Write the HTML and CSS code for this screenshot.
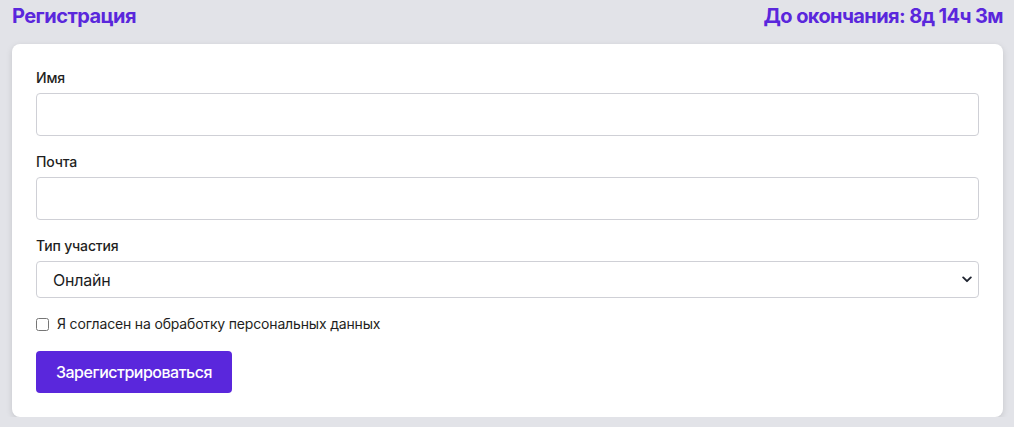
FILE: index.html
```html
<!DOCTYPE html>
<html lang="ru">
<head>
<meta charset="utf-8">
<title>Регистрация</title>
<link rel="stylesheet" href="styles.css">
</head>
<body>
<header class="top">
  <h1 class="title">Регистрация</h1>
  <div class="timer">До окончания: 8д 14ч 3м</div>
</header>
<form class="card">
  <div class="field">
    <label class="label" for="name">Имя</label>
    <input class="input" id="name" type="text">
  </div>
  <div class="field">
    <label class="label" for="mail">Почта</label>
    <input class="input" id="mail" type="email">
  </div>
  <div class="field">
    <label class="label" for="type">Тип участия</label>
    <div class="select-wrap">
      <select class="select" id="type">
        <option>Онлайн</option>
        <option>Офлайн</option>
      </select>
      <svg class="chev" width="10" height="7" viewBox="0 0 10 7"><path d="M1.2 1.4 L5 5.2 L8.8 1.4" fill="none" stroke="#1f2430" stroke-width="1.9" stroke-linecap="round" stroke-linejoin="round"/></svg>
    </div>
  </div>
  <label class="check">
    <input type="checkbox" class="cb">
    <span>Я согласен на обработку персональных данных</span>
  </label>
  <button type="button" class="btn">Зарегистрироваться</button>
</form>
</body>
</html>
```
FILE: styles.css
```css
html, body {
  margin: 0;
  padding: 0;
}
body {
  background: #e2e3e8;
  font-family: Inter, "Noto Sans", sans-serif;
  color: #1c1c1e;
  padding: 0 11px 0 12px;
}
.top {
  height: 32px;
  display: flex;
  align-items: center;
  justify-content: space-between;
  margin-bottom: 12px;
}
.title, .timer {
  margin: 0;
  font-size: 20px;
  font-weight: 700;
  color: #5a27dc;
  line-height: 28px;
  letter-spacing: -0.55px;
}
.timer {
  letter-spacing: -0.6px;
}
.card {
  display: flex;
  flex-direction: column;
  align-items: flex-start;
  background: #fff;
  border-radius: 8px;
  padding: 24px;
  box-shadow: 0 2px 6px rgba(0, 0, 0, 0.13);
}
.field {
  width: 100%;
  margin-bottom: 16px;
}
.label {
  display: block;
  font-size: 14px;
  font-weight: 500;
  line-height: 20px;
  margin-bottom: 5px;
  color: #1f1f22;
  letter-spacing: -0.15px;
}
.input {
  display: block;
  width: 100%;
  box-sizing: border-box;
  height: 43px;
  border: 1px solid #cfd0d6;
  border-radius: 4px;
  padding: 0 16px;
  font: inherit;
  font-size: 16px;
  background: #fff;
  outline: none;
}
.select-wrap {
  position: relative;
}
.select {
  display: block;
  width: 100%;
  box-sizing: border-box;
  height: 37px;
  border: 1px solid #cfd0d6;
  border-radius: 4px;
  padding: 0 16px;
  font-family: inherit;
  font-size: 16px;
  letter-spacing: -0.2px;
  color: #1c1c1e;
  background: #fff;
  appearance: none;
  -webkit-appearance: none;
  outline: none;
}
.chev {
  position: absolute;
  right: 7px;
  top: 15px;
  pointer-events: none;
}
.check {
  display: flex;
  align-items: center;
  gap: 8px;
  font-size: 14px;
  line-height: 20px;
  color: #1f1f22;
  margin-bottom: 17px;
  letter-spacing: -0.17px;
}
.cb {
  margin: 0;
  width: 13px;
  height: 13px;
}
.btn {
  height: 42px;
  padding: 0 20px;
  border: none;
  border-radius: 4px;
  background: #5a27dc;
  color: #fff;
  font-family: inherit;
  font-size: 16px;
  font-weight: 500;
  letter-spacing: -0.5px;
}
```
